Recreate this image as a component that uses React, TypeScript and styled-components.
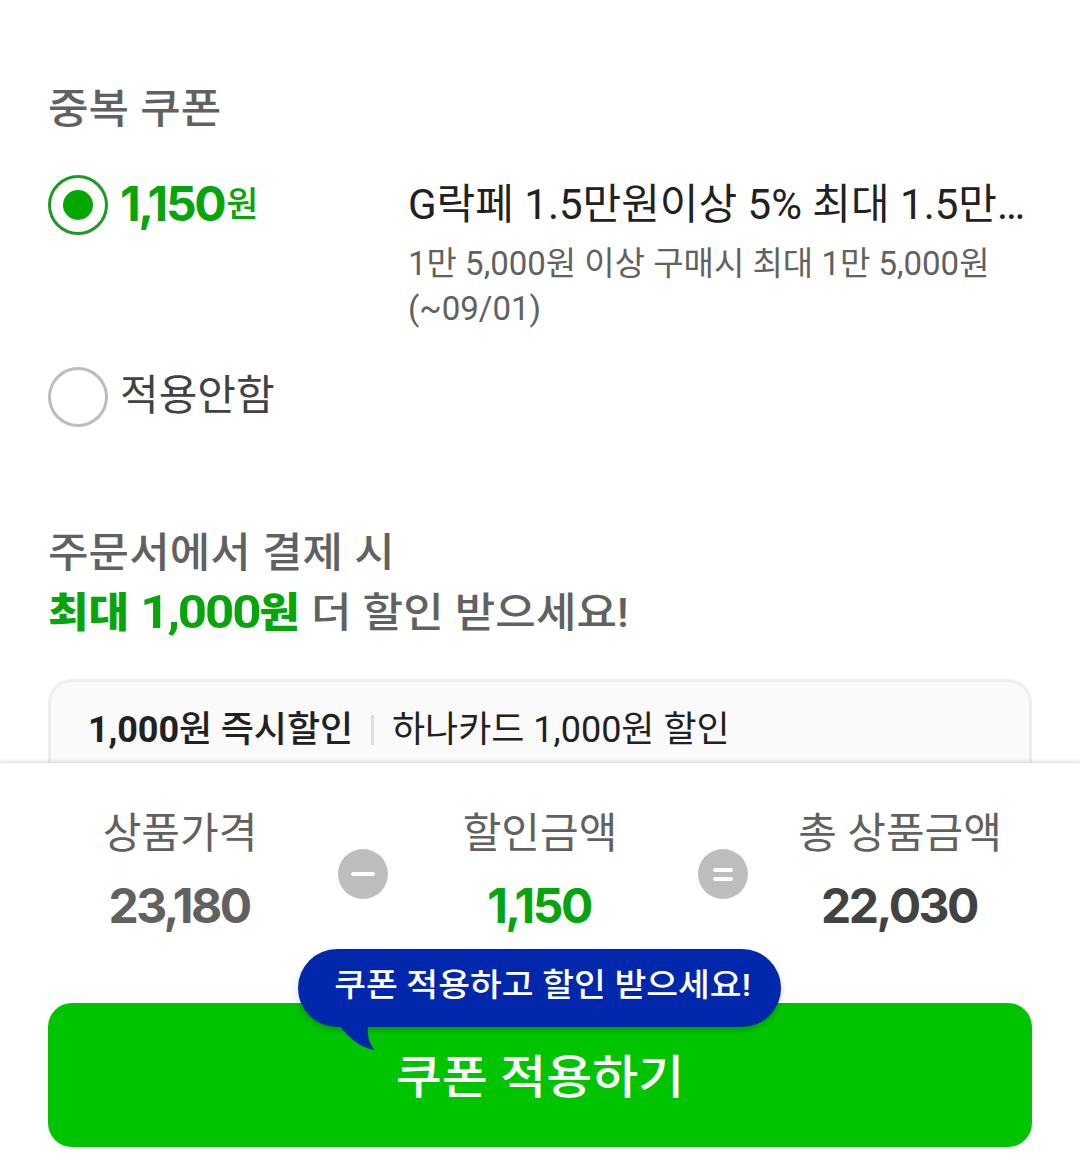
import { useState } from "react";
import styled, { createGlobalStyle } from "styled-components";

interface RadioProps {
    checked: boolean;
    onSelect: () => void;
}

const Radio = ({ checked, onSelect }: RadioProps) => (
    <RadioCircle type="button" role="radio" aria-checked={checked} $checked={checked} onClick={onSelect}>
        {checked && <RadioDot />}
    </RadioCircle>
);

const App = () => {
    const [coupon, setCoupon] = useState<"duplicate" | "none">("duplicate");

    return (
        <Page>
            <GlobalStyle />
            <Content>
                <Heading>
                    <Line>중복 쿠폰</Line>
                </Heading>
                <CouponRow>
                    <Choice>
                        <Radio checked={coupon === "duplicate"} onSelect={() => setCoupon("duplicate")} />
                        <Discount>
                            1,150<Won>원</Won>
                        </Discount>
                    </Choice>
                    <CouponInfo>
                        <CouponName>G락페 1.5만원이상 5% 최대 1.5만…</CouponName>
                        <CouponDetail>
                            1만 5,000원 이상 구매시 최대 1만 5,000원
                            <br />
                            (~09/01)
                        </CouponDetail>
                    </CouponInfo>
                </CouponRow>
                <CouponRow>
                    <Choice>
                        <Radio checked={coupon === "none"} onSelect={() => setCoupon("none")} />
                        <ChoiceLabel>적용안함</ChoiceLabel>
                    </Choice>
                </CouponRow>
                <PromoHeading>
                    <Line>주문서에서 결제 시</Line>
                    <Line>
                        <Accent>최대 <AccentNumber>1,000</AccentNumber>원</Accent> 더 할인 받으세요!
                    </Line>
                </PromoHeading>
                <PromoCard>
                    <PromoTitle>
                        <b>1,000</b>원 즉시할인
                    </PromoTitle>
                    <Divider />
                    <PromoText>하나카드 1,000원 할인</PromoText>
                </PromoCard>
            </Content>
            <Footer>
                <Summary>
                    <PriceItem>
                        <PriceLabel>상품가격</PriceLabel>
                        <PriceValue $color="#616161">23,180</PriceValue>
                    </PriceItem>
                    <Operator>
                        <Bar $width={24} />
                    </Operator>
                    <PriceItem>
                        <PriceLabel>할인금액</PriceLabel>
                        <PriceValue $color="#06a60b">1,150</PriceValue>
                    </PriceItem>
                    <Operator>
                        <Bar $width={20} />
                        <Bar $width={20} />
                    </Operator>
                    <PriceItem>
                        <PriceLabel>총 상품금액</PriceLabel>
                        <PriceValue $color="#424242">22,030</PriceValue>
                    </PriceItem>
                </Summary>
                <ApplyArea>
                    <ApplyButton type="button">
                        <Line>쿠폰 적용하기</Line>
                    </ApplyButton>
                    <Bubble>
                        <Line>쿠폰 적용하고 할인 받으세요!</Line>
                        <Tail viewBox="0 0 38 26">
                            <path d="M0 0 C8 12 21 22 34.5 24 C29 17 27 9 28 0 Z" fill="#0027ac" />
                        </Tail>
                    </Bubble>
                </ApplyArea>
            </Footer>
        </Page>
    );
};

const GlobalStyle = createGlobalStyle`
    * {
        box-sizing: border-box;
    }

    body {
        margin: 0;
        background: #fff;
        font-family: Roboto, "Noto Sans CJK KR", sans-serif;
    }

    button {
        font-family: inherit;
        padding: 0;
        border: 0;
    }
`;

const Page = styled.div`
    display: flex;
    flex-direction: column;
    width: 1080px;
    height: 1170px;
    overflow: hidden;
    background: #fff;
`;

const Content = styled.main`
    flex: 1;
    min-height: 0;
    overflow: hidden;
    padding: 79px 48px 0;
`;

const Line = styled.span`
    display: block;
    white-space: nowrap;
    transform: scaleY(0.92);
`;

const Heading = styled.h2`
    margin: 0 0 36px;
    font-size: 44px;
    font-weight: 500;
    line-height: 60px;
    letter-spacing: 0.1px;
    color: #616161;
`;

const PromoHeading = styled(Heading)`
    margin-top: 96px;
`;

const Accent = styled.strong`
    font-weight: 900;
    color: #06a60b;
`;

const AccentNumber = styled.span`
    font-size: 51px;
    font-weight: 700;
    line-height: 0;
    letter-spacing: -2.1px;
    vertical-align: -1px;
`;

const CouponRow = styled.div`
    display: grid;
    grid-template-columns: 360px 1fr;

    & + & {
        margin-top: 36px;
    }
`;

const Choice = styled.div`
    display: flex;
    align-items: flex-start;
    gap: 12px;
`;

const RadioCircle = styled.button<{ $checked: boolean }>`
    display: flex;
    align-items: center;
    justify-content: center;
    width: 60px;
    height: 60px;
    border: 3px solid ${props => props.$checked ? "#1c9a24" : "#bdbdbd"};
    border-radius: 50%;
    background: #fff;
`;

const RadioDot = styled.span`
    width: 30px;
    height: 30px;
    border-radius: 50%;
    background: #00a800;
`;

const Discount = styled.span`
    padding-top: 1px;
    font-family: Inter, "Noto Sans CJK KR", sans-serif;
    font-size: 48px;
    font-weight: 700;
    line-height: 56px;
    letter-spacing: -2.4px;
    color: #06a60b;
    white-space: nowrap;
`;

const Won = styled.span`
    margin-left: 2px;
    font-size: 35px;
    font-weight: 500;
    line-height: 0;
    letter-spacing: 0;
    vertical-align: 4px;
`;

const ChoiceLabel = styled.span`
    padding-top: 1px;
    font-size: 42px;
    line-height: 56px;
    color: #424242;
`;

const CouponInfo = styled.div`
    padding-top: 1px;
`;

const CouponName = styled.div`
    font-size: 42px;
    line-height: 57px;
    color: #212121;
    white-space: nowrap;
`;

const CouponDetail = styled.div`
    margin-top: 8px;
    font-size: 33px;
    line-height: 45px;
    color: #616161;
`;

const PromoCard = styled.div`
    display: flex;
    align-items: center;
    padding: 21px 37px 60px;
    border: 3px solid #eee;
    border-radius: 24px;
    background: #fafafa;
    font-size: 36px;
    line-height: 54px;
    color: #212121;
`;

const PromoTitle = styled.span`
    font-weight: 500;
    letter-spacing: -0.1px;
`;

const Divider = styled.span`
    width: 3px;
    height: 30px;
    margin: 0 18px;
    background: #ddd;
`;

const PromoText = styled.span`
    font-weight: 400;
`;

const Footer = styled.footer`
    position: relative;
    flex: none;
    height: 407px;
    padding-top: 46px;
    background: #fff;
    box-shadow: 0 0 5px rgba(0, 0, 0, 0.25);
`;

const Summary = styled.div`
    display: grid;
    grid-template-columns: 304px 56px 304px 56px 304px;
    padding-left: 28px;
`;

const PriceItem = styled.div`
    text-align: center;
`;

const PriceLabel = styled.div`
    font-size: 42px;
    line-height: 50px;
    color: #616161;
`;

const PriceValue = styled.div<{ $color: string }>`
    margin-top: 22px;
    padding-right: 2px;
    font-family: Inter, sans-serif;
    font-size: 48px;
    font-weight: 700;
    line-height: 50px;
    letter-spacing: -2.5px;
    color: ${props => props.$color};
`;

const Operator = styled.div`
    display: flex;
    flex-direction: column;
    align-items: center;
    justify-content: center;
    justify-self: end;
    gap: 5px;
    width: 50px;
    height: 50px;
    margin-top: 40px;
    border-radius: 50%;
    background: #bdbdbd;
`;

const Bar = styled.span<{ $width: number }>`
    width: ${props => props.$width}px;
    height: 4px;
    border-radius: 2px;
    background: #fff;
`;

const ApplyArea = styled.div`
    position: relative;
    margin: 72px 48px 0;
`;

const ApplyButton = styled.button`
    width: 100%;
    height: 144px;
    padding-top: 4px;
    border-radius: 24px;
    background: #00c400;
    font-size: 50px;
    font-weight: 500;
    line-height: 140px;
    color: #fff;
`;

const Bubble = styled.div`
    position: absolute;
    top: -54px;
    left: 250px;
    width: 483px;
    height: 78px;
    padding-left: 6px;
    border-radius: 39px;
    background: #0027ac;
    box-shadow: 0 3px 6px rgba(0, 0, 0, 0.2);
    font-size: 34.6px;
    font-weight: 500;
    line-height: 72px;
    text-align: center;
    color: #fff;
`;

const Tail = styled.svg`
    position: absolute;
    top: 77px;
    left: 42px;
    width: 38px;
    height: 26px;
`;

export default App;
